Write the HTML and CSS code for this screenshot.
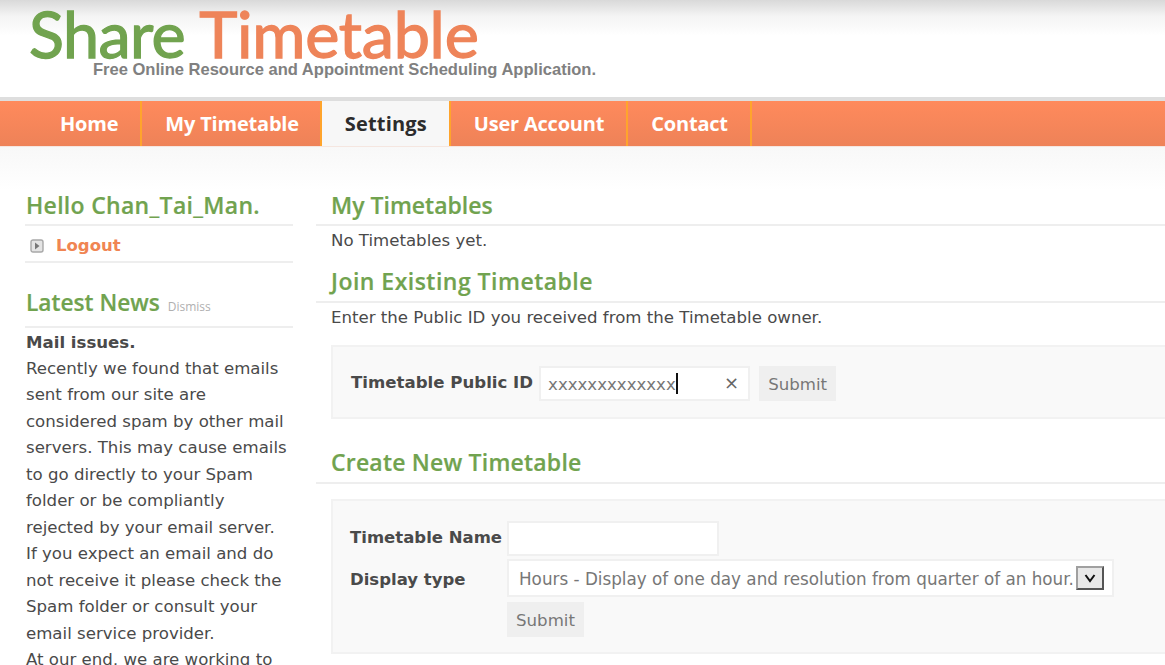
FILE: index.html
```html
<!DOCTYPE html>
<html lang="en">
<head>
<meta charset="utf-8">
<title>Share Timetable</title>
<link rel="stylesheet" href="styles.css">
</head>
<body>
<header class="header">
  <div class="logo"><span class="logo-a">Share</span> <span class="logo-b">Timetable</span></div>
  <div class="tagline">Free Online Resource and Appointment Scheduling Application.</div>
</header>
<nav class="nav">
  <a class="nav-item">Home</a>
  <a class="nav-item nav-mine">My Timetable</a>
  <a class="nav-item active">Settings</a>
  <a class="nav-item">User Account</a>
  <a class="nav-item">Contact</a>
</nav>
<div class="page">
  <aside class="side">
    <h2 class="side-h hello">Hello Chan_Tai_Man.</h2>
    <div class="logout">
      <svg class="logout-icon" width="14" height="14" viewBox="0 0 14 14"><rect x="1" y="1" width="12" height="12" rx="2" fill="#e4e4e4" stroke="#a8a8a8" stroke-width="1.4"/><path d="M5 3.500 9.500 7 5 10.500z" fill="#777"/></svg>
      <a class="logout-link">Logout</a>
    </div>
    <h2 class="side-h news-h">Latest News <small class="dismiss">Dismiss</small></h2>
    <div class="news">
      <strong class="news-title">Mail issues.</strong>
      Recently we found that emails sent from our site are considered spam by other mail servers. This may cause emails to go directly to your Spam folder or be compliantly rejected by your email server.<br>
      If you expect an email and do not receive it please check the Spam folder or consult your email service provider.<br>
      At our end, we are working to
    </div>
  </aside>
  <main class="main">
    <h2 class="main-h first">My Timetables</h2>
    <p class="txt">No Timetables yet.</p>
    <h2 class="main-h join">Join Existing Timetable</h2>
    <p class="txt">Enter the Public ID you received from the Timetable owner.</p>
    <div class="panel panel-join">
      <label class="lbl lbl-id">Timetable Public ID</label>
      <div class="field field-id"><span class="val">xxxxxxxxxxxxx</span><span class="caret"></span><span class="clear">×</span></div>
      <button class="btn btn-id">Submit</button>
    </div>
    <h2 class="main-h create">Create New Timetable</h2>
    <div class="panel panel-create">
      <div class="row">
        <label class="lbl lbl-c lbl-up">Timetable Name</label>
        <div class="field field-name"></div>
      </div>
      <div class="row row-sel">
        <label class="lbl lbl-c lbl-down">Display type</label>
        <div class="field field-select"><span class="val-sel">Hours - Display of one day and resolution from quarter of an hour.</span>
          <span class="arrow"><svg width="14" height="10" viewBox="0 0 14 10"><path d="M2.500 2 7 8 11.500 2" fill="none" stroke="#111" stroke-width="2"/></svg></span>
        </div>
      </div>
      <div class="row">
        <span class="lbl lbl-c"></span>
        <button class="btn">Submit</button>
      </div>
    </div>
  </main>
</div>
</body>
</html>
```

FILE: styles.css
```css
html, body { margin: 0; padding: 0; height: 665px; overflow: hidden; background: #fff; }
body { font-family: "DejaVu Sans", Verdana, sans-serif; font-size: 16.6px; color: #4a4a4a; }
.header { height: 97px; box-sizing: border-box; background: linear-gradient(#d9d9d9 0, #f4f4f4 16px, #fff 36px); padding: 3px 0 0 29px; }
.logo { font-family: "Lato", sans-serif; font-size: 64.7px; line-height: 60px; letter-spacing: -0.6px; -webkit-text-stroke: 1.3px; white-space: nowrap; }
.logo-a { color: #71a34f; }
.logo-b { color: #ee8459; margin-left: -2px; letter-spacing: -0.25px; }
.tagline { font-family: "Liberation Sans", Arial, sans-serif; font-weight: bold; font-size: 16.55px; line-height: 14px; color: #808080; margin-left: 64px; }
.nav { height: 45px; border-top: 4px solid #dedede; background: linear-gradient(#ff8a5c, #ee8258); display: flex; padding-left: 37px; border-bottom: 1px solid #f5e6e0; }
.nav-item { font-family: "Open Sans", sans-serif; font-weight: 700; font-size: 20px; line-height: 45px; letter-spacing: -0.2px; color: #fff; padding: 0 22px 0 23px; border-right: 2px solid #ffa42c; }
.nav-item.nav-mine { padding-right: 21px; }
.nav-item.active { background: #f7f7f7; color: #2c2c2c; letter-spacing: 0.15px; }
.page { display: flex; background: linear-gradient(#f8f8f8 0, #fff 44px); height: 519px; padding-left: 25px; }
.side { width: 268px; flex: none; }
.side-h { font-family: "Open Sans", sans-serif; font-weight: 600; font-size: 23px; line-height: 32px; color: #71a34f; margin: 0; padding: 42px 0 3px 1px; border-bottom: 2px solid #eee; -webkit-text-stroke: .2px; }
.hello { letter-spacing: 0.3px; }
.logout { display: flex; align-items: center; height: 31px; padding-top: 4px; border-bottom: 2px solid #eee; padding-left: 5px; }
.logout-icon { flex: none; }
.logout-link { font-weight: bold; font-size: 16.5px; color: #f08552; margin-left: 12px; }
.side-h.news-h { font-size: 22.7px; padding-top: 24px; padding-bottom: 3px; }
.dismiss { font-size: 12px; font-weight: 400; color: #b0b0b0; margin-left: 2px; -webkit-text-stroke: 0; }
.news { font-size: 16.6px; line-height: 26.5px; padding: 2px 0 0 1px; }
.news-title { display: block; height: 25.500px; line-height: 26.500px; }
.main { flex: 1; min-width: 0; margin-left: 23px; }
.main-h { font-family: "Open Sans", sans-serif; font-weight: 600; font-size: 23px; line-height: 32px; color: #71a34f; margin: 0; padding: 0 0 3px 15px; border-bottom: 2px solid #eee; -webkit-text-stroke: .2px; }
.main-h.first { padding-top: 42px; }
.main-h.join { padding: 11px 0 4px 15px; letter-spacing: 0.48px; }
.main-h.create { padding: 27px 0 4px 15px; letter-spacing: 0.2px; }
.txt { margin: 0 0 0 15px; line-height: 30px; height: 28px; }
.panel { margin-left: 15px; background: #f9f9f9; border: 2px solid #f2f2f2; border-right: 0; box-sizing: border-box; }
.panel-join { margin-top: 14px; height: 74px; display: flex; align-items: center; padding: 2px 0 0 18px; }
.panel-create { margin-top: 15px; height: 155px; padding: 20px 0 0 17px; }
.lbl { font-weight: bold; }
.lbl-id { margin: 0 6px 2px 0; white-space: nowrap; }
.lbl-c { width: 157px; flex: none; white-space: nowrap; font-size: 16.5px; }
.lbl-up { margin-bottom: 2px; }
.lbl-down { margin-top: 2px; }
.field { background: #fff; border: 2px solid #f0f0f0; box-sizing: border-box; }
.field-id { width: 211px; height: 35px; display: flex; align-items: center; padding: 2px 0 0 7px; position: relative; color: #777; }
.caret { width: 2px; height: 21px; background: #111; margin-top: -2px; }
.clear { position: absolute; right: 9px; top: 3px; font-size: 18px; line-height: 24px; color: #666; }
.btn { font-family: inherit; font-size: 16.6px; color: #777; background: #efefef; border: 0; padding: 2px 0 0; width: 77px; height: 35px; }
.btn-id { margin-left: 9px; }
.row { display: flex; align-items: center; }
.row-sel { margin: 3px 0 5px; }
.field-name { width: 212px; height: 35px; }
.field-select { width: 607px; height: 38px; display: flex; align-items: center; padding: 0 0 0 10px; color: #777; white-space: nowrap; }
.val-sel { font-size: 16.8px; padding-top: 2px; }
.arrow { width: 28px; height: 24px; margin-left: 2px; border: 2px solid; border-color: #a0a0a0 #555 #555 #a0a0a0; background: #e8e8e8; box-sizing: border-box; display: flex; align-items: center; justify-content: center; flex: none; }
```
